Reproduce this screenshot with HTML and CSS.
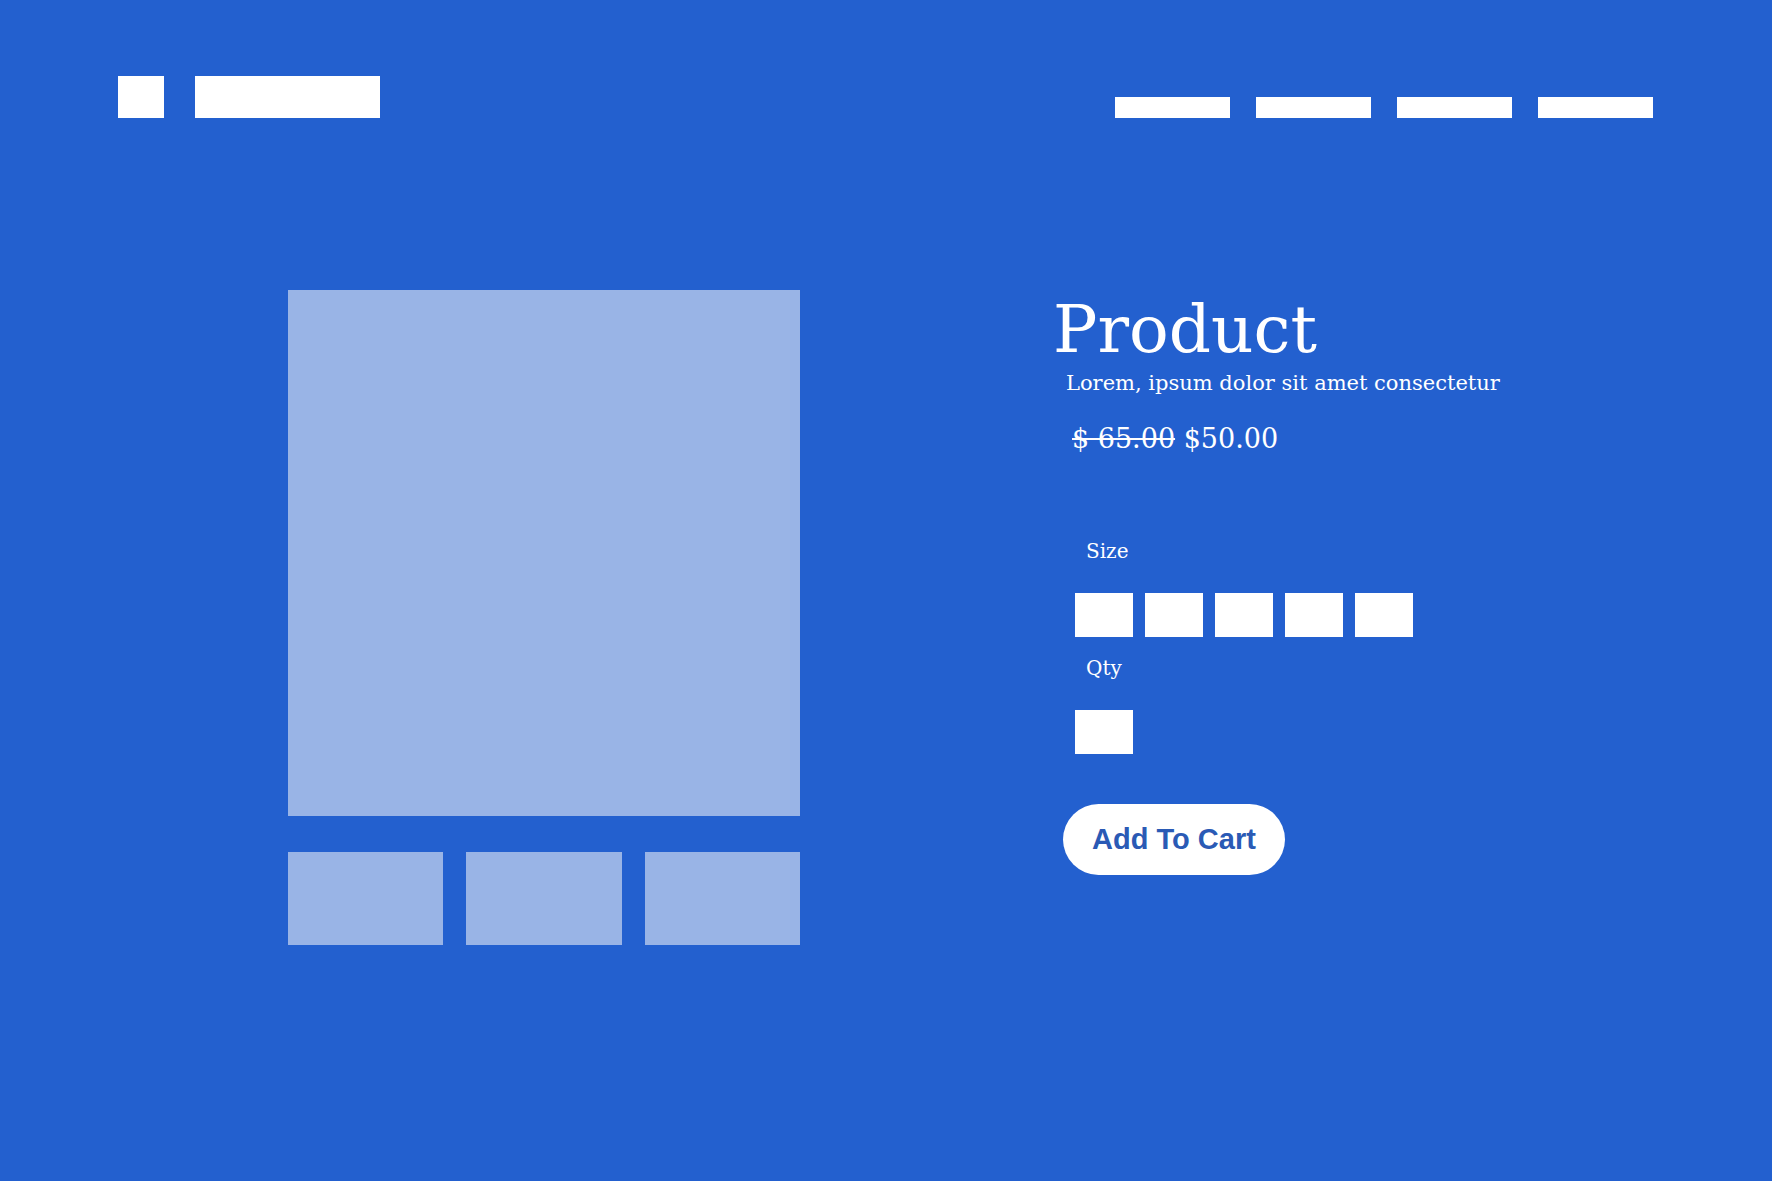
FILE: index.html
```html
<!DOCTYPE html>
<html lang="en">
<head>
  <meta charset="UTF-8" />
  <title>Product</title>
  <link rel="stylesheet" href="styles.css">
</head>
<body>

  <!-- Header -->
  <header class="topbar">
    <div class="brand">
      <span class="brand-mark"></span>
      <span class="brand-name"></span>
    </div>
    <nav class="menu">
      <span class="menu-item"></span>
      <span class="menu-item"></span>
      <span class="menu-item"></span>
      <span class="menu-item"></span>
    </nav>
  </header>

  <!-- Product -->
  <main class="product">
    <div class="gallery">
      <div class="photo-main"></div>
      <div class="thumbs">
        <div class="thumb"></div>
        <div class="thumb"></div>
        <div class="thumb"></div>
      </div>
    </div>

    <div class="details">
      <h1>Product</h1>
      <p class="desc">Lorem, ipsum dolor sit amet consectetur</p>
      <p class="price"><s>$ 65.00</s> $50.00</p>

      <div class="options">
        <label class="opt-label">Size</label>
        <div class="sizes">
          <span class="box"></span>
          <span class="box"></span>
          <span class="box"></span>
          <span class="box"></span>
          <span class="box"></span>
        </div>

        <label class="opt-label qty">Qty</label>
        <div class="sizes">
          <span class="box"></span>
        </div>
      </div>

      <button type="button" class="btn-cart">Add To Cart</button>
    </div>
  </main>

</body>
</html>
```

FILE: styles.css
```css
body {
  margin: 0;
  background-color: #2360cf;
  font-family: "DejaVu Serif", serif;
  color: white;
  min-height: 1181px;
}
.topbar {
  display: flex;
  justify-content: space-between;
  align-items: flex-end;
  padding: 76px 119px 0 118px;
}
.brand {
  display: flex;
  gap: 31px;
}
.brand-mark {
  width: 46px;
  height: 42px;
  background: white;
}
.brand-name {
  width: 185px;
  height: 42px;
  background: white;
}
.menu {
  display: flex;
  gap: 26px;
}
.menu-item {
  width: 115px;
  height: 21px;
  background: white;
}

.product {
  display: flex;
  padding-left: 288px;
  margin-top: 172px;
}
.gallery {
  width: 512px;
}
.photo-main {
  height: 526px;
  background-color: #99b4e6;
}
.thumbs {
  display: grid;
  grid-template-columns: repeat(3, 1fr);
  gap: 23px;
  margin-top: 36px;
}
.thumb {
  height: 93px;
  background-color: #99b4e6;
}

.details {
  margin-left: 256px;
  padding-top: 6px;
}
h1 {
  font-size: 66px;
  font-weight: normal;
  line-height: 68px;
  margin: 0 0 0 -3px;
}
.desc {
  font-size: 21px;
  line-height: 24px;
  margin: 7px 0 0;
  padding-left: 10px;
}
.price {
  font-size: 27px;
  line-height: 32px;
  margin: 28px 0 0;
  padding-left: 16px;
}
.options {
  margin-top: 84px;
  padding-left: 19px;
}
.opt-label {
  display: block;
  font-size: 20px;
  line-height: 24px;
  padding-left: 11px;
}
.opt-label.qty {
  margin-top: 19px;
}
.sizes {
  display: flex;
  gap: 12px;
  margin-top: 30px;
}
.box {
  width: 58px;
  height: 44px;
  background: white;
}
.btn-cart {
  display: block;
  margin: 50px 0 0 7px;
  width: 222px;
  height: 71px;
  border: none;
  border-radius: 36px;
  background: white;
  color: #2a5ab5;
  font-family: "Liberation Sans", Arial, sans-serif;
  font-weight: bold;
  font-size: 29px;
  cursor: pointer;
}
```
